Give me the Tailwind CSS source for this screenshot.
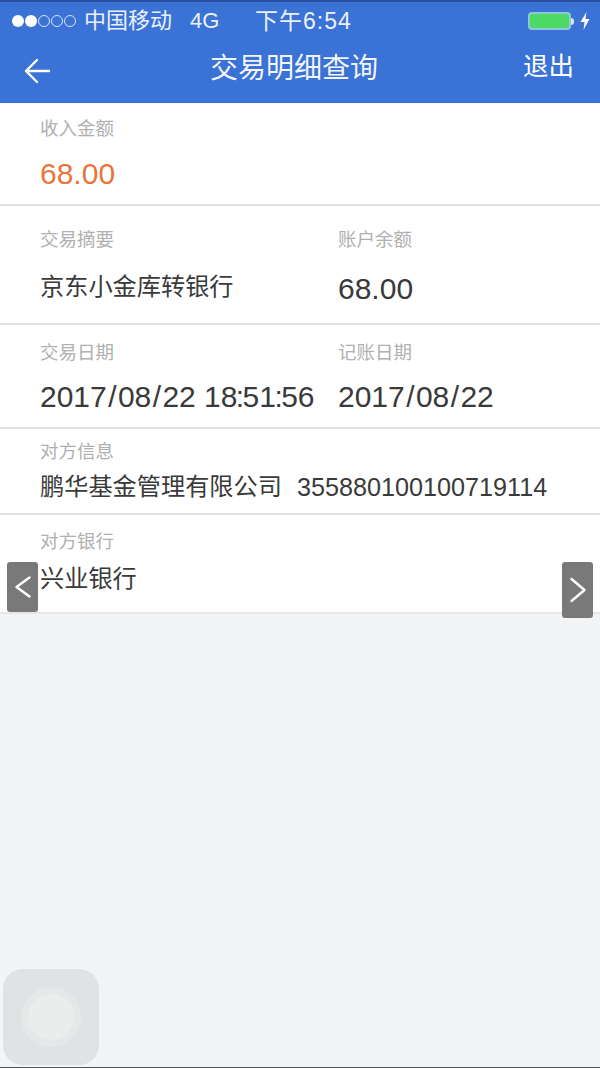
<!DOCTYPE html>
<html lang="zh">
<head>
<meta charset="utf-8">
<script src="https://cdn.jsdelivr.net/npm/@tailwindcss/browser@4"></script>
</head>
<body class="font-['Liberation_Sans','Noto_Sans_CJK_SC',sans-serif]">
<div class="relative w-[600px] h-[1068px] overflow-hidden bg-[#f3f4f6]">
  <header class="h-[103px] bg-[#3a72d6] border-t-2 border-t-[#2a4f9e] text-white flex flex-col">
    <div class="h-[38px] px-3 flex items-center text-[22px] text-white/90 leading-none">
      <div class="flex items-center gap-[1px] w-[72px] shrink-0">
        <span class="w-[12px] h-[12px] rounded-full bg-white"></span>
        <span class="w-[12px] h-[12px] rounded-full bg-white"></span>
        <span class="w-[12px] h-[12px] rounded-full border border-white/80"></span>
        <span class="w-[12px] h-[12px] rounded-full border border-white/80"></span>
        <span class="w-[12px] h-[12px] rounded-full border border-white/80"></span>
      </div>
      <span class="w-[106px] shrink-0">中国移动</span>
      <span class="w-[65px] shrink-0">4G</span>
      <span class="tracking-[1px] text-[23px]">下午6:54</span>
      <div class="ml-auto flex items-center gap-[6px] mr-[-2px]">
        <div class="flex items-center">
          <div class="w-[43px] h-[18px] rounded-[4px] border-2 border-[#8fc7d8] bg-[#4cd964]"></div>
          <div class="w-[3px] h-[7px] bg-white/80 rounded-r-sm"></div>
        </div>
        <svg width="10" height="18" viewBox="0 0 10 18"><path d="M6.5 0 L0.5 10 H4.5 L3.5 18 L9.5 7 H5.5 Z" fill="#fff"/></svg>
      </div>
    </div>
    <div class="flex-1 relative flex items-center justify-center pb-[6px]">
      <svg class="absolute left-[24px] top-[18px]" width="27" height="26" viewBox="0 0 27 26" fill="none" stroke="#fff" stroke-width="2.4" stroke-linecap="round" stroke-linejoin="round"><path d="M25 13 H2 M13 2 L2 13 L13 24"/></svg>
      <span class="text-[28px] leading-none text-white/95 ml-[-12px]">交易明细查询</span>
      <span class="absolute right-[26px] top-[14px] text-[25.5px] leading-none">退出</span>
    </div>
  </header>

  <main class="bg-white text-[#3a3a3a]">
    <section class="h-[103px] border-b-2 border-b-[#dfe1e3] pl-[40px] pt-[17px]">
      <div class="text-[#b0b0b0] text-[18.5px] leading-none">收入金额</div>
      <div class="text-[#e8763a] text-[30px] leading-none mt-[20px]">68.00</div>
    </section>
    <section class="h-[119px] border-b-2 border-b-[#dfe1e3] pl-[40px] pt-[25px] grid grid-cols-[298px_1fr]">
      <div>
        <div class="text-[#b0b0b0] text-[18.5px] leading-none">交易摘要</div>
        <div class="text-[24.2px] leading-none mt-[25px]">京东小金库转银行</div>
      </div>
      <div>
        <div class="text-[#b0b0b0] text-[18.5px] leading-none">账户余额</div>
        <div class="text-[30px] leading-none mt-[24px]">68.00</div>
      </div>
    </section>
    <section class="h-[104px] border-b-2 border-b-[#dfe1e3] pl-[40px] pt-[19px] grid grid-cols-[298px_1fr]">
      <div>
        <div class="text-[#b0b0b0] text-[18.5px] leading-none">交易日期</div>
        <div class="text-[30px] leading-none mt-[19px] whitespace-nowrap">2017<span class="mx-[1.4px]">/</span>08<span class="mx-[1.4px]">/</span>22 18<span class="mx-[-1.6px]">:</span>51<span class="mx-[-1.6px]">:</span>56</div>
      </div>
      <div>
        <div class="text-[#b0b0b0] text-[18.5px] leading-none">记账日期</div>
        <div class="text-[30px] leading-none mt-[19px]">2017<span class="mx-[1.4px]">/</span>08<span class="mx-[1.4px]">/</span>22</div>
      </div>
    </section>
    <section class="h-[86px] border-b-2 border-b-[#dfe1e3] pl-[40px] pt-[14px]">
      <div class="text-[#b0b0b0] text-[18.5px] leading-none">对方信息</div>
      <div class="flex items-center mt-[13px] whitespace-nowrap leading-none">
        <span class="text-[24.2px]">鹏华基金管理有限公司</span>
        <span class="text-[25.2px] ml-[15px]">355880100100719114</span>
      </div>
    </section>
    <section class="h-[99px] border-b-2 border-b-[#e4e6e8] pl-[40px] pt-[18px]">
      <div class="text-[#b0b0b0] text-[18.5px] leading-none">对方银行</div>
      <div class="text-[24.2px] leading-none mt-[15px]">兴业银行</div>
    </section>
  </main>

  <div class="absolute left-[7px] top-[562px] w-[31px] h-[50px] rounded-[3px] bg-[#797979] flex items-center justify-center">
    <svg width="18" height="26" viewBox="0 0 18 26" fill="none" stroke="#fff" stroke-width="2.4" stroke-linecap="round" stroke-linejoin="round"><path d="M15.5 3.5 L2.5 13 L15.5 22.5"/></svg>
  </div>
  <div class="absolute left-[562px] top-[562px] w-[31px] h-[56px] rounded-[3px] bg-[#797979] flex items-center justify-center">
    <svg width="18" height="26" viewBox="0 0 18 26" fill="none" stroke="#fff" stroke-width="2.4" stroke-linecap="round" stroke-linejoin="round"><path d="M2.5 2 L15.5 13 L2.5 24"/></svg>
  </div>

  <div class="absolute left-[3px] top-[969px] w-[96px] h-[96px] rounded-[20px] bg-[#e1e2e3] flex items-center justify-center">
    <div class="w-[60px] h-[60px] rounded-full bg-[#e6e7e8] flex items-center justify-center">
      <div class="w-[46px] h-[46px] rounded-full bg-[#ebecec]"></div>
    </div>
  </div>
  <div class="absolute left-0 bottom-0 w-full h-[1px] bg-[#55585c]"></div>
</div>
</body>
</html>
